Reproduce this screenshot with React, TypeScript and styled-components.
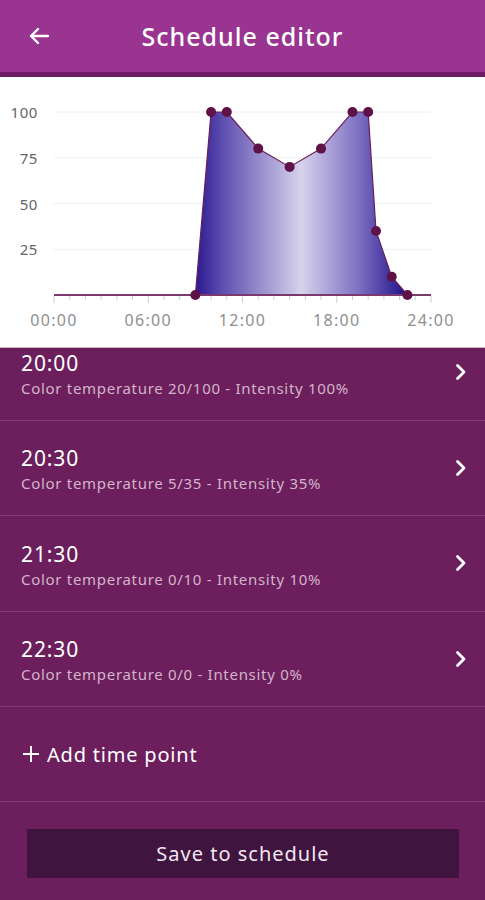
import React from 'react';
import styled, { createGlobalStyle } from 'styled-components';

const GlobalStyle = createGlobalStyle`
    html, body {
        margin: 0;
        padding: 0;
        background: #6c1f5c;
    }
    body {
        font-family: "Noto Sans", "Open Sans", sans-serif;
    }
`;

const Page = styled.div`
    width: 485px;
    height: 900px;
    display: flex;
    flex-direction: column;
    background: #6c1f5c;
    overflow: hidden;
`;

const Header = styled.header`
    height: 72px;
    background: #993490;
    display: flex;
    align-items: center;
    position: relative;
    justify-content: center;
    border-bottom: 5px solid #6e1b62;
    box-shadow: 0 1px 0 #e9c9e0;
    flex-shrink: 0;
`;

const BackBtn = styled.button`
    position: absolute;
    left: 25px;
    top: 22px;
    background: transparent;
    border: none;
    padding: 0;
    width: 28px;
    height: 28px;
    display: flex;
    align-items: center;
    justify-content: center;
    cursor: pointer;
`;

const Title = styled.h1`
    margin: 0;
    color: #fff;
    font-size: 25px;
    font-weight: 500;
    letter-spacing: 1px;
`;

const ChartPanel = styled.section`
    height: 270px;
    background: #fff;
    border-bottom: 1px solid #c7b6c2;
    flex-shrink: 0;
    position: relative;
    z-index: 1;
`;

// the list is scrolled a bit, so the first row slides under the chart
const ListViewport = styled.div`
    flex: 1;
    overflow: hidden;
    display: flex;
    flex-direction: column;
`;

const List = styled.div`
    margin-top: -23px;
    display: flex;
    flex-direction: column;
`;

const Row = styled.div`
    height: 95.5px;
    box-sizing: border-box;
    display: flex;
    align-items: center;
    padding: 0 17px 0 21px;
    border-bottom: 1px solid #7e3a70;
`;

const RowText = styled.div`
    flex: 1;
    display: flex;
    flex-direction: column;
    gap: 4px;
    padding-top: 3px;
`;

const Time = styled.div`
    color: #fff;
    font-size: 21px;
    line-height: 24px;
    letter-spacing: 0.9px;
`;

const Sub = styled.div`
    color: #d3b4cb;
    font-size: 15px;
    line-height: 18px;
    letter-spacing: 0.7px;
`;

const AddRow = styled.div`
    height: 95px;
    box-sizing: border-box;
    display: flex;
    align-items: center;
    gap: 7px;
    padding: 0 21px 0 22px;
    border-bottom: 1px solid #7e3a70;
    color: #fff;
    font-size: 20px;
    letter-spacing: 0.8px;
`;

const Footer = styled.div`
    padding: 27px 26px 0 27px;
`;

const SaveBtn = styled.button`
    width: 100%;
    height: 49px;
    background: #3f1540;
    border: none;
    color: #f2e6ef;
    font-family: "Noto Sans", "Open Sans", sans-serif;
    font-size: 20px;
    letter-spacing: 1px;
    cursor: pointer;
`;

interface TimePoint {
    time: string;
    ct: string;
    intensity: number;
}

const points: TimePoint[] = [
    { time: '20:00', ct: '20/100', intensity: 100 },
    { time: '20:30', ct: '5/35', intensity: 35 },
    { time: '21:30', ct: '0/10', intensity: 10 },
    { time: '22:30', ct: '0/0', intensity: 0 },
];

// chart data: [hour, value]
const curve: [number, number][] = [
    [9, 0], [10, 100], [11, 100], [13, 80], [15, 70], [17, 80],
    [19, 100], [20, 100], [20.5, 35], [21.5, 10], [22.5, 0],
];

const X0 = 54;
const X1 = 431;
const BASE = 218;
const TOP = 35;
const xOf = (h: number) => X0 + (h / 24) * (X1 - X0);
const yOf = (v: number) => BASE - (v / 100) * (BASE - TOP);

const yFont = { fontSize: 15, fontFamily: 'Noto Sans, sans-serif', letterSpacing: 0.6 };
const xFont = { fontSize: 16, fontFamily: 'Noto Sans, sans-serif', letterSpacing: 1.3 };

const Chart = () => {
    const line = curve.map(([h, v]) => `${xOf(h)},${yOf(v)}`).join(' ');
    const area = `M${xOf(9)},${BASE} L${line.replace(/ /g, ' L')} Z`;
    return (
        <svg width="485" height="270" viewBox="0 0 485 270">
            <defs>
                <linearGradient id="fill" gradientUnits="userSpaceOnUse" x1={xOf(9)} x2={xOf(22.5)} y1="0" y2="0">
                    <stop offset="0" stopColor="#2c1890" />
                    <stop offset="0.12" stopColor="#5b4bae" />
                    <stop offset="0.5" stopColor="#d6d3ec" />
                    <stop offset="0.78" stopColor="#7a6cc0" />
                    <stop offset="1" stopColor="#1d0f88" />
                </linearGradient>
            </defs>
            {[100, 75, 50, 25].map(v => (
                <g key={v}>
                    <line x1={X0} x2={X1} y1={yOf(v)} y2={yOf(v)} stroke="#eeeeee" strokeWidth="1" />
                    <text x="38" y={yOf(v) + 6} textAnchor="end" fill="#666" {...yFont}>{v}</text>
                </g>
            ))}
            <path d={area} fill="url(#fill)" />
            <line x1={X0} x2={X1} y1={BASE} y2={BASE} stroke="#7a3a6e" strokeWidth="2" />
            {Array.from({ length: 25 }, (_, i) => (
                <line key={i} x1={xOf(i)} x2={xOf(i)} y1={BASE + 1} y2={BASE + (i % 6 === 0 ? 8 : 5)}
                    stroke="#cfcfcf" strokeWidth="1" />
            ))}
            <polyline points={line} fill="none" stroke="#6a1d5c" strokeWidth="1.2" />
            {curve.map(([h, v]) => (
                <circle key={h} cx={xOf(h)} cy={yOf(v)} r="5" fill="#5e1248" />
            ))}
            {[0, 6, 12, 18, 24].map(h => (
                <text key={h} x={xOf(h)} y="249" textAnchor="middle" fill="#8f8f8f" {...xFont}>
                    {`${String(h).padStart(2, '0')}:00`}
                </text>
            ))}
        </svg>
    );
};

const Chevron = () => (
    <svg width="14" height="18" viewBox="0 0 14 18">
        <path d="M3.5 2.5 L10 9 L3.5 15.5" fill="none" stroke="#fff" strokeWidth="2.8" strokeLinecap="round" strokeLinejoin="round" />
    </svg>
);

export default function App() {
    return (
        <Page>
            <GlobalStyle />
            <Header>
                <BackBtn>
                    <svg width="24" height="24" viewBox="0 0 24 24">
                        <path d="M21 12 H4 M11 5 L4 12 L11 19" fill="none" stroke="#fff" strokeWidth="2.4" strokeLinecap="round" strokeLinejoin="round" />
                    </svg>
                </BackBtn>
                <Title>Schedule editor</Title>
            </Header>
            <ChartPanel>
                <Chart />
            </ChartPanel>
            <ListViewport>
                <List>
                    {points.map(p => (
                        <Row key={p.time}>
                            <RowText>
                                <Time>{p.time}</Time>
                                <Sub>Color temperature {p.ct} - Intensity {p.intensity}%</Sub>
                            </RowText>
                            <Chevron />
                        </Row>
                    ))}
                    <AddRow>
                        <svg width="18" height="18" viewBox="0 0 18 18">
                            <path d="M9 1 V17 M1 9 H17" stroke="#fff" strokeWidth="2" />
                        </svg>
                        Add time point
                    </AddRow>
                </List>
                <Footer>
                    <SaveBtn>Save to schedule</SaveBtn>
                </Footer>
            </ListViewport>
        </Page>
    );
}
